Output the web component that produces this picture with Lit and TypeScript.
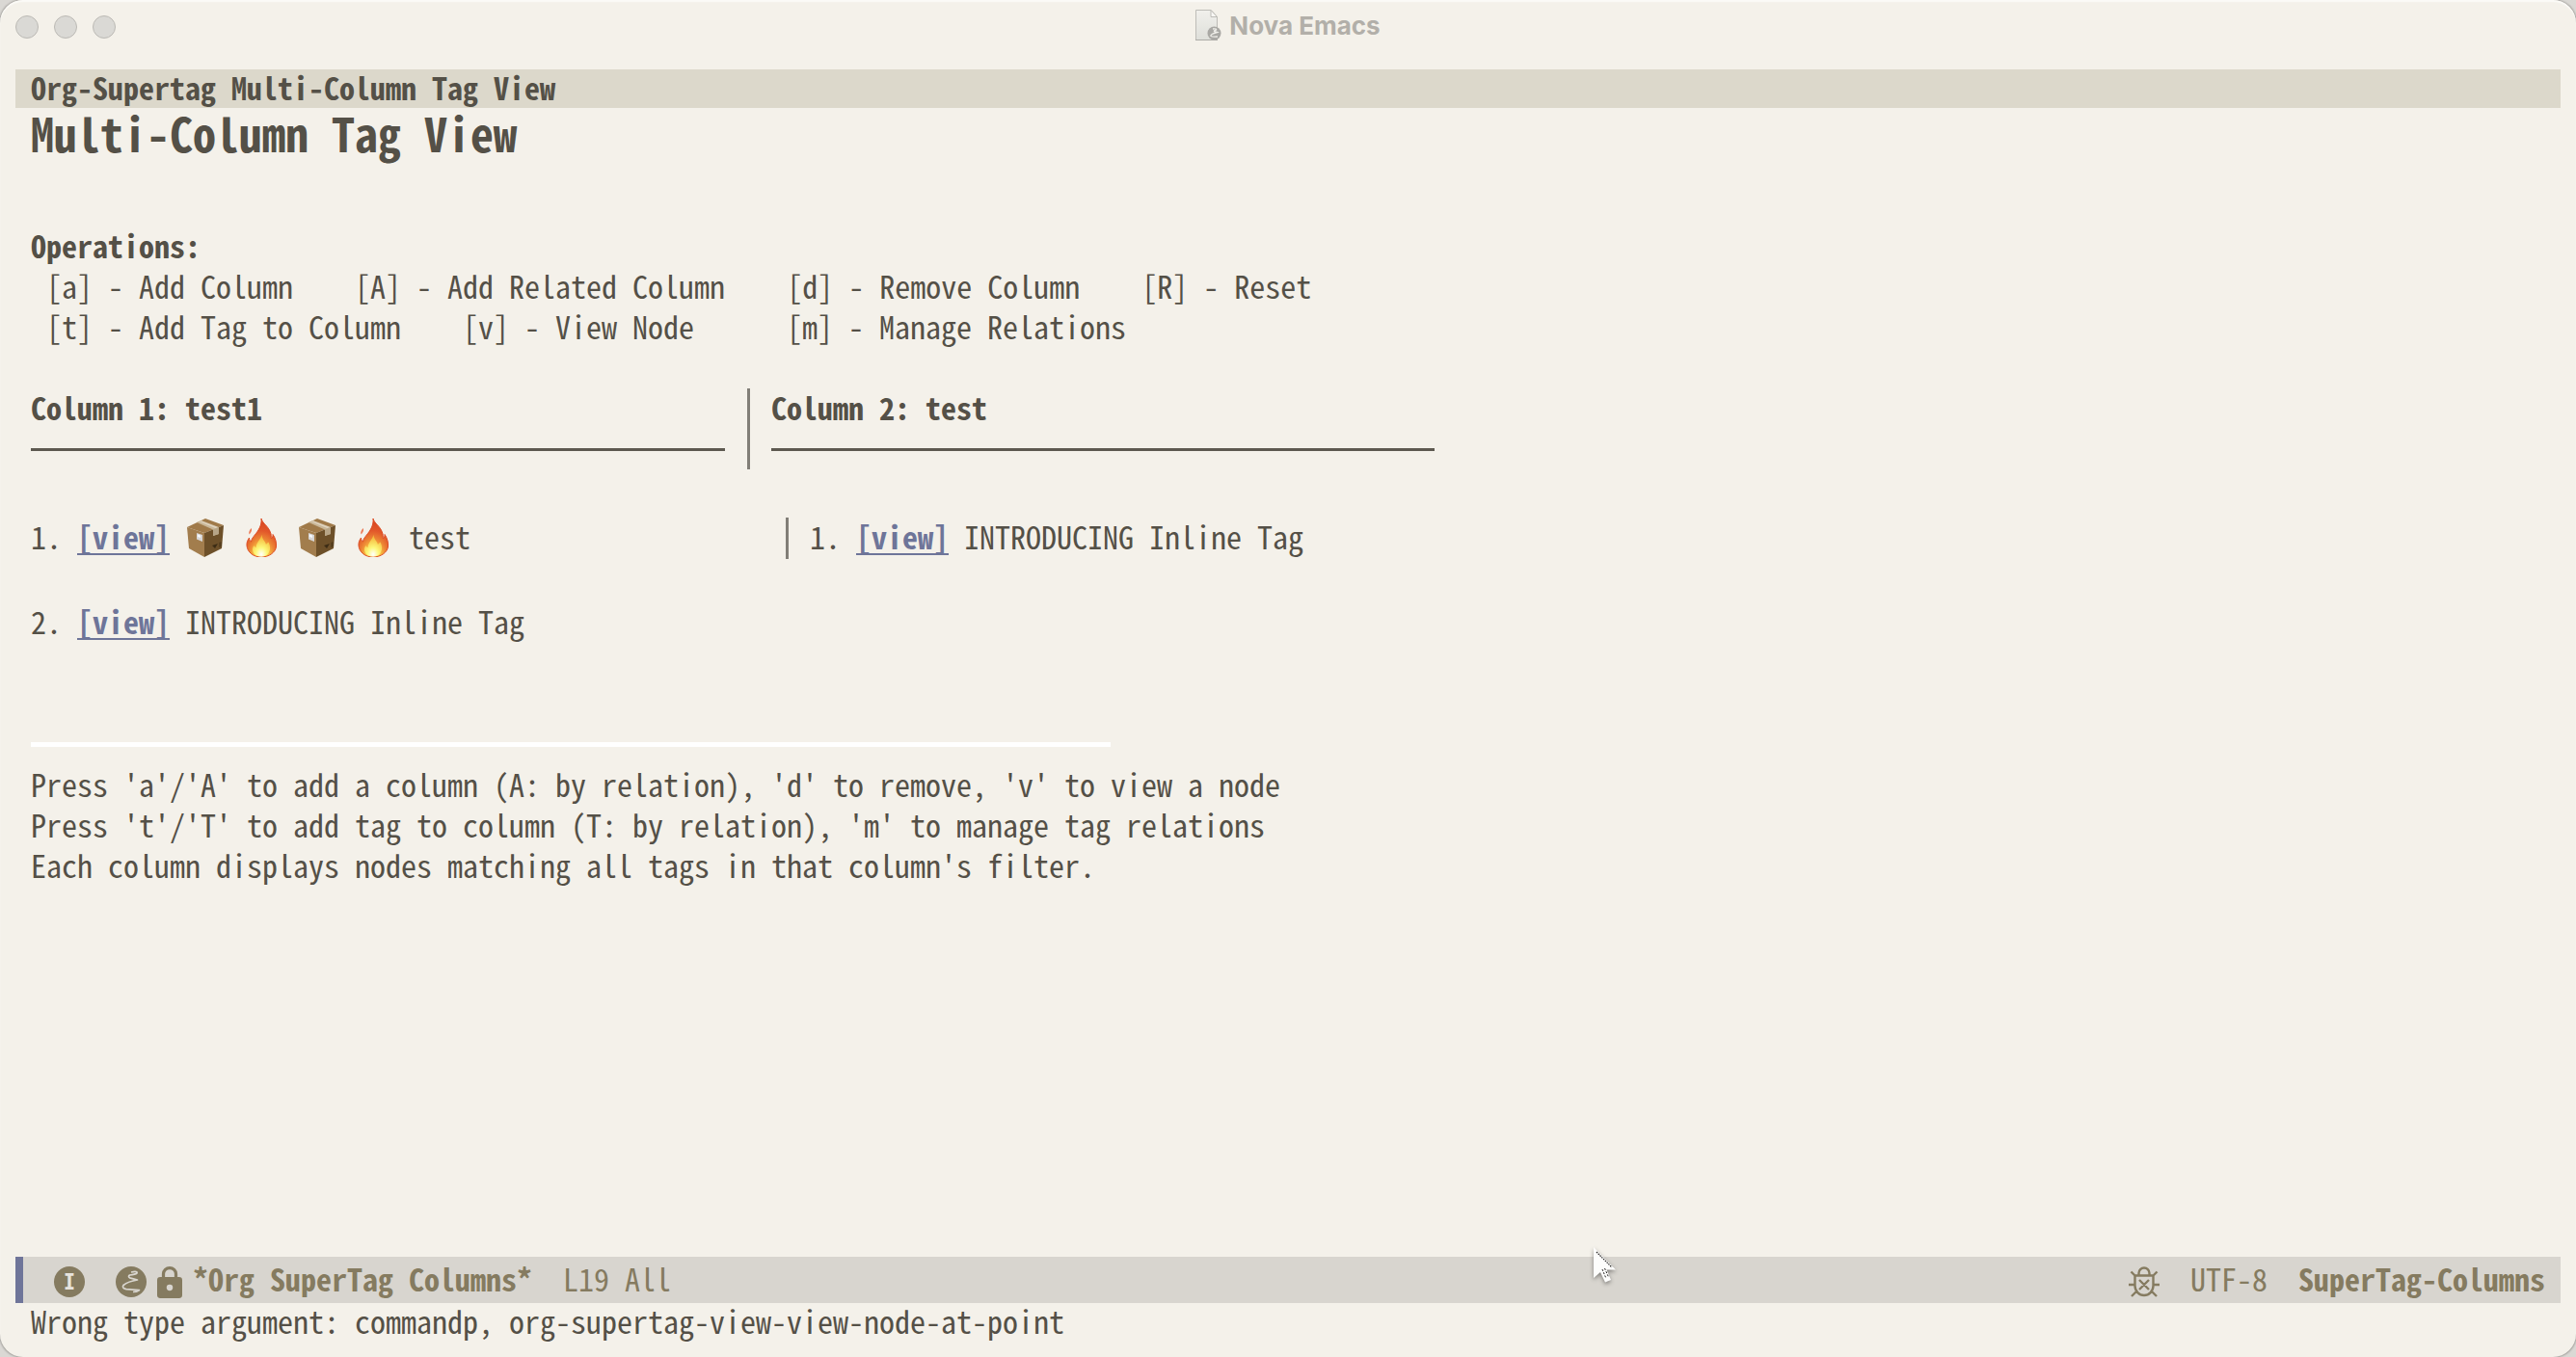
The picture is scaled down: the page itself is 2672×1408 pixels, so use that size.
import { LitElement, html, css } from "lit";
import { customElement } from "lit/decorators.js";

interface Operation {
  key: string;
  label: string;
}

const OPERATIONS: Operation[][] = [
  [
    { key: "a", label: "Add Column" },
    { key: "A", label: "Add Related Column" },
    { key: "d", label: "Remove Column" },
    { key: "R", label: "Reset" },
  ],
  [
    { key: "t", label: "Add Tag to Column" },
    { key: "v", label: "View Node" },
    { key: "m", label: "Manage Relations" },
  ],
];

const HELP = [
  "Press 'a'/'A' to add a column (A: by relation), 'd' to remove, 'v' to view a node",
  "Press 't'/'T' to add tag to column (T: by relation), 'm' to manage tag relations",
  "Each column displays nodes matching all tags in that column's filter.",
];

const documentIcon = html`<svg class="doc-icon" viewBox="0 0 27 33" aria-hidden="true">
  <defs>
    <linearGradient id="page" x1="0" y1="0" x2="0" y2="1">
      <stop offset="0" stop-color="#f1f0ec" />
      <stop offset="1" stop-color="#dedfda" />
    </linearGradient>
  </defs>
  <path d="M.5 .5H16L22.5 7.500V31.500H.5Z" fill="url(#page)" stroke="#bdbcb7" />
  <path d="M16 .5V7.500H22.500Z" fill="#f8f7f4" stroke="#bdbcb7" stroke-linejoin="round" />
  <path d="M0 31.500H23" stroke="#adaca7" />
  <circle cx="19.500" cy="24.500" r="7" fill="#a9a8a4" />
  <path d="M18 20Q23 19.500 21 21.500Q17 22 22.500 23.500Q15 25.500 16 27.500Q18 28.500 23 28" fill="none" stroke="#efeee9" stroke-width="1.300" />
</svg>`;

const emacsIcon = html`<svg class="icon" viewBox="0 0 32 32" aria-hidden="true">
  <circle class="solid" cx="16" cy="16" r="16" />
  <path class="squiggle" d="M16 6Q23 4.500 22 7Q20.500 8.200 14.500 9Q12.500 10.500 14.500 11.800Q18 12.500 22.500 14Q13 15.500 8 19.500Q6 22.500 11 23.700Q17 24.500 24.500 24.500Q22 26.500 18 26.500" />
</svg>`;

const lockIcon = html`<svg class="lock" viewBox="4 1 16 21" preserveAspectRatio="none" aria-hidden="true">
  <path class="solid" fill-rule="evenodd" d="M12 17a2 2 0 0 0 2-2a2 2 0 0 0-2-2a2 2 0 0 0-2 2a2 2 0 0 0 2 2m6-9a2 2 0 0 1 2 2v10a2 2 0 0 1-2 2H6a2 2 0 0 1-2-2V10a2 2 0 0 1 2-2h1V6a5 5 0 0 1 10 0v2h1m-6-5a3 3 0 0 0-3 3v2h6V6a3 3 0 0 0-3-3z" />
</svg>`;

const bugIcon = html`<svg class="icon" viewBox="0 0 32 32" aria-hidden="true">
  <path class="line" d="M10.500 9.500V7A5.500 5.500 0 0 1 21.500 7V9.500M6.500 9.500H25.500V20A9.500 10 0 0 1 6.500 20ZM2.500 5.500L6.500 9.500M29.500 5.500L25.500 9.500M0 19H6.500M25.500 19H32M3 31L8.500 25.500M29 31L23.500 25.500M11 14L21 24M21 14L11 24" />
</svg>`;

const boxEmoji = html`<svg class="emoji" viewBox="0 0 42 40" role="img" aria-label="package">
  <path d="M2 9L21 0L40 7L20 15Z" fill="#a07a49" />
  <path d="M2 9L20 15V40L4 31Z" fill="#a27d4d" />
  <path d="M20 15L40 7L38 31L20 40Z" fill="#6d5029" />
  <path d="M12 4L17 2L35 9V16L29 18V11.500Z" fill="#c9b798" />
  <path d="M14.500 3L16 2.400L34 9L31.500 10Z" fill="#e0d4c0" />
  <path d="M29 11.500L35 9V16L29 18Z" fill="#b7a587" />
  <path d="M12 15L18 17V24L12 21.500Z" fill="#d7d6d6" />
  <path d="M13 16.500L16 17.500V20L13 19Z" fill="#f5f7fa" />
  <path d="M28 28L34 26L31 31Z" fill="#3c2c15" />
  <path d="M35 25L38 24V29L35 30Z" fill="#57401f" />
</svg>`;

const fireEmoji = html`<svg class="emoji" viewBox="0 0 42 40" role="img" aria-label="fire">
  <defs>
    <radialGradient id="flame" cx=".5" cy=".95" r=".9">
      <stop offset="0" stop-color="#fffde0" />
      <stop offset=".14" stop-color="#fff35a" />
      <stop offset=".3" stop-color="#f8b83f" />
      <stop offset=".48" stop-color="#ec8434" />
      <stop offset=".7" stop-color="#e2582a" />
      <stop offset="1" stop-color="#d84420" />
    </radialGradient>
    <radialGradient id="core" cx=".5" cy=".9" r=".8">
      <stop offset="0" stop-color="#ffffff" />
      <stop offset=".4" stop-color="#fdf87a" />
      <stop offset="1" stop-color="#f4b83a" />
    </radialGradient>
  </defs>
  <path d="M21 0C22 5 29 8 31 16C31.500 18.500 31 20 31.500 21C33 20 33 18 33 16.500C35.500 20 37 25 36.500 29C36 35 29 40 21 40C13 40 6.500 35 6 28C5.700 25 7 22 8.500 20C8.500 22 9 23 10.500 24C11 20 15 17 18 12C20.500 8 21.500 4 21 0Z" fill="url(#flame)" stroke="#dd4c24" />
  <path d="M11 10C9 11.500 7.500 14 8.500 16.500C10 15 11.500 13 11 10Z" fill="#ec7a56" />
  <path d="M21.500 17C22 22 25 23 26 27C27 25.500 28 25 28.500 24.500C30 28 31 31 29 35C27 38.500 24 39.500 20.500 39.500C15 39 11.500 36 12 31C12.500 29.500 13 28.500 13.500 28C14 29.500 15 30 15.500 30C16 25 20 22 21.500 17Z" fill="url(#core)" />
</svg>`;

const pointer = html`<svg class="pointer" viewBox="0 0 60 60" aria-hidden="true">
  <path d="M23 14V46L30 40L35 50.500L41 48L36.500 37.500H46Z" fill="#fdfdfc" />
  <path d="M26 19L42 35" stroke="#23211f" stroke-width="1.200" stroke-dasharray="1.500 1" fill="none" />
  <path d="M32 37L36 46.500M34.500 36L38.500 45" stroke="#23211f" stroke-dasharray="2 1.500" fill="none" />
</svg>`;

@customElement("app-root")
export class AppRoot extends LitElement {
  static styles = css`
    :host {
      display: block;
      background: #dad8d4;
      color: #545047;
      font: 400 32px/42px "Noto Sans Mono CJK SC", "Noto Sans CJK SC", monospace;
      font-feature-settings: "hwid";
    }
    .window {
      position: relative;
      display: flex;
      flex-direction: column;
      box-sizing: border-box;
      min-height: 100vh;
      padding: 0 16px 20px;
      border-radius: 24px;
      overflow: hidden;
      background: #f4f1ea;
      box-shadow: 0 0 2px 1px #a09e9a, inset 0 2px 1px #fbfaf7;
    }
    h1, h2, p, ul { margin: 0; padding: 0; font-size: inherit; }
    ul { list-style: none; }
    svg { display: block; flex: none; }

    .titlebar {
      display: grid;
      grid-template-columns: 1fr auto 1fr;
      align-items: start;
      height: 72px;
    }
    .lights { display: flex; gap: 16px; padding-top: 16px; }
    .light {
      box-sizing: border-box;
      width: 24px;
      height: 24px;
      padding: 0;
      border: 1px solid #bbb9b4;
      border-radius: 50%;
      background: #dad9d5;
    }
    .title {
      display: flex;
      gap: 8px;
      padding-top: 10px;
      font: 700 26px/34px Inter, "Liberation Sans", sans-serif;
      font-feature-settings: normal;
      color: #b2afa9;
    }
    .doc-icon { width: 27px; height: 33px; }

    .header-line {
      padding: 0 16px 4px;
      background: #dcd8cb;
      font-weight: 700;
      line-height: 36px;
    }
    .buffer { flex: 1; padding: 0 16px; white-space: nowrap; }
    .heading {
      margin-bottom: 70px;
      font-size: 48px;
      font-weight: 700;
      line-height: 51px;
    }
    .strong { font-weight: 700; }
    .ops { display: flex; gap: 64px; padding-left: 16px; }
    .wide { min-width: 272px; }

    .columns { display: flex; margin-top: 42px; }
    .column { width: 720px; }
    .column.last { width: 688px; }
    .rule { height: 3px; margin: 22px 0 17px; border: 0; background: #5d5950; }
    .divider {
      width: 3px;
      margin: 2px 22px -2px 23px;
      background: #817e77;
    }
    .rows { display: grid; gap: 45px; margin-top: 50px; }
    .row { display: flex; }
    .cell { display: flex; gap: 16px; min-width: 783px; }
    .row .divider { margin-left: 0; }
    a {
      color: #6e7599;
      font-weight: 700;
      text-decoration: underline 2px;
      text-underline-offset: 4px;
      text-decoration-skip-ink: none;
    }
    .emoji { width: 42px; height: 40px; margin-top: 3px; }
    .separator {
      width: 1120px;
      height: 5px;
      margin: 105px 0 17px;
      border: 0;
      background: #ffffff;
    }

    .modeline {
      display: flex;
      justify-content: space-between;
      box-sizing: border-box;
      height: 48px;
      padding: 0 16px 4px 32px;
      border-left: 8px solid #6f7599;
      background: #d8d5cf;
      color: #857b60;
      line-height: 44px;
      white-space: nowrap;
    }
    .group { display: flex; gap: 32px; }
    .buffer-id { display: flex; font-weight: 700; }
    .icon { width: 32px; height: 32px; margin-top: 10px; }
    .lock { width: 26px; height: 33px; margin: 10px 11px 0; }
    .solid { fill: #857b60; }
    .line { fill: none; stroke: #857b60; stroke-width: 2.4; }
    .squiggle { fill: none; stroke: #d8d5cf; stroke-width: 1.7; stroke-linejoin: round; }
    .state {
      border-radius: 50%;
      background: #857b60;
      color: #e6e3dd;
      font-size: 22px;
      font-weight: 700;
      line-height: 28px;
      text-align: center;
    }
    .echo { padding: 0 16px; line-height: 36px; }
    .pointer {
      position: absolute;
      left: 1630px;
      bottom: 68px;
      width: 60px;
      height: 60px;
      filter: drop-shadow(0 2px 2px #00000066);
    }
  `;

  private link() {
    return html`<a href="#node">[view]</a>`;
  }

  render() {
    return html`
      <div class="window">
        <header class="titlebar">
          <div class="lights">
            <button class="light" aria-label="Close"></button>
            <button class="light" aria-label="Minimize"></button>
            <button class="light" aria-label="Zoom"></button>
          </div>
          <div class="title">${documentIcon}<span>Nova Emacs</span></div>
        </header>
        <div class="header-line">Org-Supertag Multi-Column Tag View</div>
        <main class="buffer">
          <h1 class="heading">Multi-Column Tag View</h1>
          <h2 class="strong">Operations:</h2>
          ${OPERATIONS.map(
            (line) => html`<ul class="ops">
              ${line.map(
                (op) => html`<li class=${op.key === "v" ? "wide" : ""}>[${op.key}] - ${op.label}</li>`
              )}
            </ul>`
          )}
          <section class="columns">
            <div class="column"><h2 class="strong">Column 1: test1</h2><hr class="rule" /></div>
            <div class="divider"></div>
            <div class="column last"><h2 class="strong">Column 2: test</h2><hr class="rule" /></div>
          </section>
          <section class="rows">
            <div class="row">
              <div class="cell">
                <span>1.</span>${this.link()}${boxEmoji}${fireEmoji}${boxEmoji}${fireEmoji}<span>test</span>
              </div>
              <div class="divider"></div>
              <div class="cell"><span>1.</span>${this.link()}<span>INTRODUCING Inline Tag</span></div>
            </div>
            <div class="row">
              <div class="cell"><span>2.</span>${this.link()}<span>INTRODUCING Inline Tag</span></div>
            </div>
          </section>
          <hr class="separator" />
          ${HELP.map((line) => html`<p>${line}</p>`)}
        </main>
        <footer>
          <div class="modeline">
            <div class="group">
              <span class="icon state">I</span>
              <div class="buffer-id">${emacsIcon}${lockIcon}<span>*Org SuperTag Columns*</span></div>
              <span>L19 All</span>
            </div>
            <div class="group">
              ${bugIcon}<span>UTF-8</span><span class="strong">SuperTag-Columns</span>
            </div>
          </div>
          <div class="echo">Wrong type argument: commandp, org-supertag-view-view-node-at-point</div>
        </footer>
        ${pointer}
      </div>
    `;
  }
}
